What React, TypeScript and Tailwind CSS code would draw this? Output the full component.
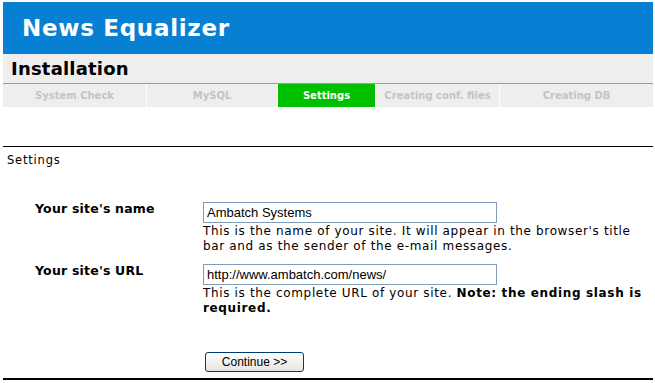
import React from 'react'

const steps = [
  { label: 'System Check', width: 'w-[143px]' },
  { label: 'MySQL', width: 'w-[130px]' },
  { label: 'Settings', width: 'w-[97px]', active: true },
  { label: 'Creating conf. files', width: 'w-[123px]' },
  { label: 'Creating DB', width: 'flex-1' },
]

function Field({
  label,
  value,
  children,
}: {
  label: string
  value: string
  children: React.ReactNode
}) {
  return (
    <div className="flex pl-[32px]">
      <div className="w-[168px] text-[12.5px] leading-[14px] font-bold tracking-[0.2px] text-black">{label}</div>
      <div className="flex-1">
        <div className="flex h-[21px] w-[294px] items-center border border-[#7f9db9] bg-white px-[3px] font-['Liberation_Sans',Arial,sans-serif] text-[13px] text-black">
          {value}
        </div>
        <p className="mt-[1px] w-[440px] text-[12px] leading-[15px] tracking-[0.65px] text-black">{children}</p>
      </div>
    </div>
  )
}

export default function App() {
  return (
    <div className="w-[655px] bg-white pt-[2px] pl-[3px] pr-[2px] font-['DejaVu_Sans',Verdana,sans-serif]">
      {/* Header */}
      <div className="flex h-[52px] items-center bg-[#0780d4] pl-[19px]">
        <h1 className="text-[23px] font-bold tracking-[0.7px] text-white">News Equalizer</h1>
      </div>

      {/* Installation bar */}
      <div className="flex h-[30px] items-center border-b border-[#9a9a9a] bg-[#eeeeee] pl-[8px]">
        <h2 className="text-[18px] font-bold tracking-[0.2px] text-black">Installation</h2>
      </div>

      {/* Steps */}
      <div className="flex h-[23px] gap-px bg-white">
        {steps.map((s) => (
          <div
            key={s.label}
            className={`${s.width} flex items-center justify-center text-[10px] font-bold ${
              s.active ? 'bg-[#00c000] text-white' : 'bg-[#eeeeee] text-[#c4c4c4]'
            }`}
          >
            {s.label}
          </div>
        ))}
      </div>

      {/* Settings */}
      <div className="mt-[39px] border-t border-black pt-[5px]">
        <div className="pl-[4px] text-[11.5px] tracking-[0.8px] text-black">Settings</div>

        <div className="mt-[33px] flex flex-col gap-[10px]">
          <Field label="Your site's name" value="Ambatch Systems">
            This is the name of your site. It will appear in the browser's title bar and as the sender of
            the e-mail messages.
          </Field>
          <Field label="Your site's URL" value="http://www.ambatch.com/news/">
            This is the complete URL of your site. <b>Note: the ending slash is</b>
            <br />
            <b>required.</b>
          </Field>
        </div>

        <div className="mt-[33px] pl-[202px]">
          <button className="h-[20px] w-[99px] rounded-[3px] border border-[#003c74] bg-gradient-to-b from-white to-[#e6e5df] font-['Liberation_Sans',Arial,sans-serif] text-[12px] text-black">
            Continue &gt;&gt;
          </button>
        </div>
        <div className="mt-[5px] border-t-2 border-black" />
      </div>
    </div>
  )
}
